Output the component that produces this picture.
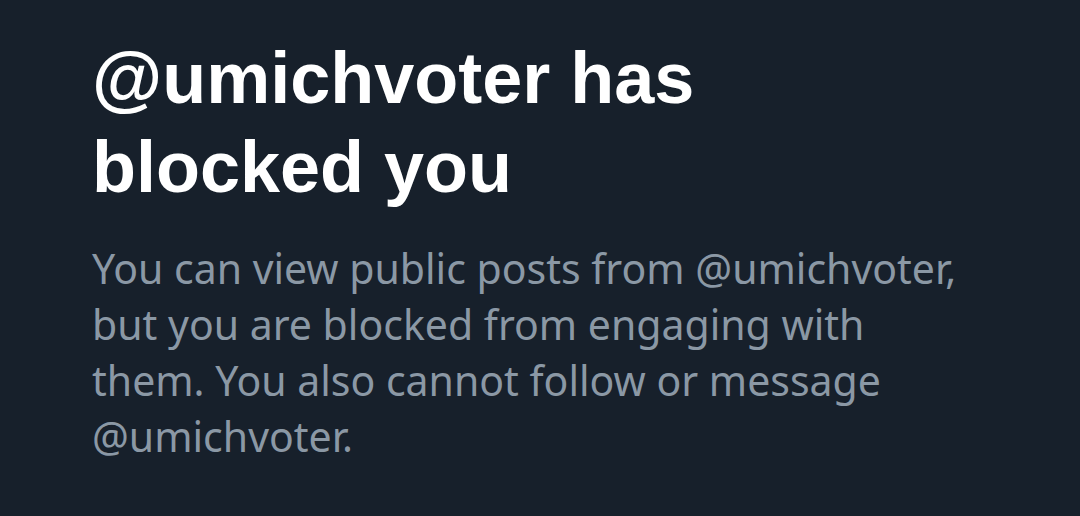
export default function App() {
  return (
    <div className="w-[1080px] h-[516px] bg-[#17202b] overflow-hidden">
      <div className="pl-[92px] pt-[34px] pr-[40px]">
        <h1 className="text-[72px] leading-[89px] font-bold text-white font-['Liberation_Sans',Arial,sans-serif]">
          @umichvoter has
          <br />
          blocked you
        </h1>
        <p className="mt-[28px] text-[41px] leading-[56px] text-[#8b98a5] font-['Noto_Sans',sans-serif]">
          You can view public posts from @umichvoter,
          <br />
          but you are blocked from engaging with
          <br />
          them. You also cannot follow or message
          <br />
          @umichvoter.
        </p>
      </div>
    </div>
  );
}
